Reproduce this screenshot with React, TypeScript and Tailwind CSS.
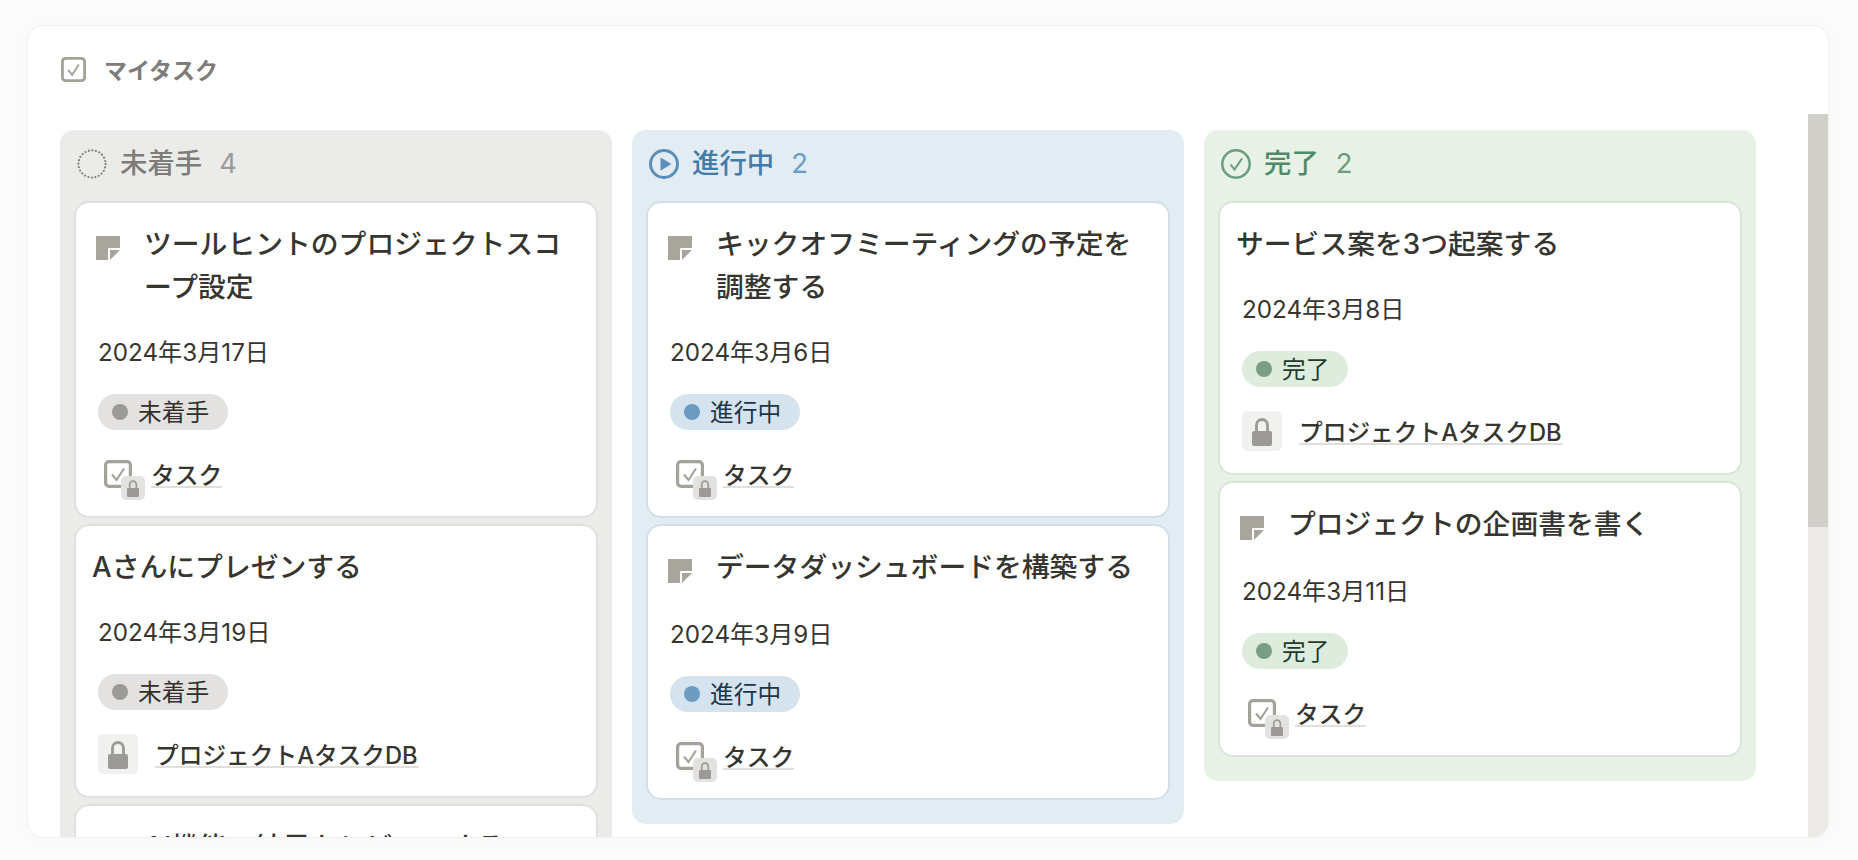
import React from 'react';

type Status = 'todo' | 'doing' | 'done';
type Relation = 'task' | 'db';

interface Task {
	title: string;
	icon?: boolean;
	date: string;
	relation: Relation;
}

const FONT = 'font-["Inter","Noto_Sans_CJK_JP",sans-serif]';

const THEMES = {
	todo: {
		column: 'bg-[#ebebe9]',
		ring: 'shadow-[0_0_0_2px_#e0dfdc]',
		title: 'text-[#7d7c78]',
		count: 'text-[#9b9a97]',
		pill: 'bg-[#e3e2e0] text-[#32302c]',
		dot: 'bg-[#9b9a97]',
	},
	doing: {
		column: 'bg-[#e1ecf3]',
		ring: 'shadow-[0_0_0_2px_#d3dfe8]',
		title: 'text-[#447ba8]',
		count: 'text-[#6a9cc5]',
		pill: 'bg-[#d4e3ee] text-[#1e3548]',
		dot: 'bg-[#6d9abf]',
	},
	done: {
		column: 'bg-[#e7f1e6]',
		ring: 'shadow-[0_0_0_2px_#dae5da]',
		title: 'text-[#4f8a68]',
		count: 'text-[#699c7f]',
		pill: 'bg-[#deecdd] text-[#233a2b]',
		dot: 'bg-[#7a9e85]',
	},
};

const COLUMNS: { status: Status; label: string; tasks: Task[]; count: number }[] = [
	{
		status: 'todo',
		label: '未着手',
		count: 4,
		tasks: [
			{ title: 'ツールヒントのプロジェクトスコープ設定', icon: true, date: '2024年3月17日', relation: 'task' },
			{ title: 'Aさんにプレゼンする', date: '2024年3月19日', relation: 'db' },
			{ title: 'AI機能の結果をレビューする', icon: true, date: '2024年3月21日', relation: 'task' },
		],
	},
	{
		status: 'doing',
		label: '進行中',
		count: 2,
		tasks: [
			{ title: 'キックオフミーティングの予定を調整する', icon: true, date: '2024年3月6日', relation: 'task' },
			{ title: 'データダッシュボードを構築する', icon: true, date: '2024年3月9日', relation: 'task' },
		],
	},
	{
		status: 'done',
		label: '完了',
		count: 2,
		tasks: [
			{ title: 'サービス案を3つ起案する', date: '2024年3月8日', relation: 'db' },
			{ title: 'プロジェクトの企画書を書く', icon: true, date: '2024年3月11日', relation: 'task' },
		],
	},
];

function LockGlyph({ size }: { size: number }) {
	return (
		<svg width={size} height={size} viewBox="0 0 40 40" fill="none">
			<path d="M14.5 21V14a5.5 5.5 0 0 1 11 0v7" stroke="#9b9a97" strokeWidth="2.8" />
			<rect x="10" y="20" width="20" height="15" rx="2" fill="#9b9a97" />
		</svg>
	);
}

function CheckboxIcon({ size }: { size: number }) {
	return (
		<svg width={size} height={size} viewBox="0 0 28 28" fill="none">
			<rect x="1.6" y="1.6" width="24.8" height="24.8" rx="3.4" stroke="#a5a29a" strokeWidth="3.2" />
			<path d="M8 14.5l4.5 5.5L20 8.5" stroke="#a5a29a" strokeWidth="2.1" />
		</svg>
	);
}

function PageIcon() {
	return (
		<svg width="24" height="24" viewBox="0 0 24 24" className="shrink-0 mt-[13px]">
			<path d="M0 0H24V12H12V24H0Z" fill="#a8a59d" />
			<path d="M14 14H24L14 24Z" fill="#a8a59d" />
		</svg>
	);
}

function StatusIcon({ status }: { status: Status }) {
	if (status === 'todo') {
		return (
			<svg width="30" height="30" viewBox="0 0 30 30" fill="none" className="shrink-0">
				<circle cx="15" cy="15" r="13.6" stroke="#85847f" strokeWidth="2.3" strokeLinecap="round" strokeDasharray="0 3.56" />
			</svg>
		);
	}
	if (status === 'doing') {
		return (
			<svg width="30" height="30" viewBox="0 0 30 30" fill="none" className="shrink-0">
				<circle cx="15" cy="15" r="13.5" stroke="#5b8fba" strokeWidth="3" />
				<path d="M11.5 8.6l11 6.4-11 6.8Z" fill="#5b8fba" />
			</svg>
		);
	}
	return (
		<svg width="30" height="30" viewBox="0 0 30 30" fill="none" className="shrink-0">
			<circle cx="15" cy="15" r="13.7" stroke="#6a9c7d" strokeWidth="2.5" />
			<path d="M9.5 15.5l4 5L21 9.5" stroke="#6a9c7d" strokeWidth="2" />
		</svg>
	);
}

function RelationRow({ relation }: { relation: Relation }) {
	if (relation === 'db') {
		return (
			<div className="mt-6 ml-[21px] h-10 flex items-center">
				<div className="w-10 h-10 rounded-[5px] bg-[#f1f1ef] flex items-center justify-center">
					<LockGlyph size={40} />
				</div>
				<span className="ml-[17px] mt-1 pt-[2px] pr-[1px] border-b-2 border-[#e0dfdc] text-[23.7px] leading-5 font-medium text-[#37352f]">
					プロジェクトAタスクDB
				</span>
			</div>
		);
	}
	return (
		<div className="mt-6 ml-[21px] h-10 flex items-center">
			<div className="relative w-[47px] h-10 shrink-0">
				<div className="absolute left-[6px] top-[6px]">
					<CheckboxIcon size={28} />
				</div>
				<div className="absolute left-[23px] top-[22px] w-6 h-6 rounded-[5px] bg-[#e3e2e0]">
					<LockGlyph size={24} />
				</div>
			</div>
			<span className="ml-[6px] mt-1 pt-[2px] border-b-2 border-[#e0dfdc] text-[23.7px] leading-5 font-medium text-[#37352f]">
				タスク
			</span>
		</div>
	);
}

function TaskCard({ task, status }: { task: Task; status: Status }) {
	const theme = THEMES[status];
	return (
		<div className={`rounded-[13px] ${theme.ring} bg-white pt-5 pb-[22px] px-[1px]`}>
			{task.icon ? (
				<div className="flex min-h-[45px] pl-[19px] pr-4">
					<PageIcon />
					<div className="ml-6 text-[27.8px] leading-[43px] font-medium text-[#37352f]">{task.title}</div>
				</div>
			) : (
				<div className="pl-[15px] pr-4 text-[27.8px] leading-[43px] font-medium text-[#37352f]">{task.title}</div>
			)}
			<div className="mt-[26px] pl-[21px] text-[24.2px] leading-9 text-[#37352f]">{task.date}</div>
			<div className="mt-[23px] ml-[21px] flex">
				<div className={`flex items-center h-9 rounded-full pl-[14px] pr-[19px] text-[23.7px] ${theme.pill}`}>
					<span className={`w-4 h-4 rounded-full mr-[10px] ${theme.dot}`} />
					<span className="mt-[2px]">{status === 'todo' ? '未着手' : status === 'doing' ? '進行中' : '完了'}</span>
				</div>
			</div>
			<RelationRow relation={task.relation} />
		</div>
	);
}

export default function App() {
	return (
		<div className={`h-[860px] w-full overflow-hidden bg-[#fbfbfb] pt-[25px] pl-[27px] ${FONT}`}>
			<div className="w-[1802px] h-[813px] rounded-2xl border border-[#f0f0ee] bg-white overflow-hidden flex flex-col shadow-[0_0_24px_rgba(0,0,0,0.02)]">
				<div className="h-[88px] shrink-0 flex items-start pl-[33px] pt-[31px]">
					<CheckboxIcon size={25} />
					<span className="ml-[18px] mt-[1px] text-[23px] leading-[26px] font-bold text-[#7d7c78]">マイタスク</span>
				</div>
				<div className="flex-1 min-h-0 flex">
					<div className="flex-1 min-w-0 overflow-hidden flex items-start gap-5 pl-[32px] pt-4">
						{COLUMNS.map((col) => {
							const theme = THEMES[col.status];
							return (
								<div key={col.status} className={`w-[552px] shrink-0 rounded-[14px] px-4 pb-[26px] ${theme.column}`}>
									<div className="h-[73px] flex items-center pl-[1px] pb-[6px]">
										<StatusIcon status={col.status} />
										<span className={`ml-[13px] text-[27.4px] font-medium ${theme.title}`}>{col.label}</span>
										<span className={`ml-[17px] text-[27.4px] ${theme.count}`}>{col.count}</span>
									</div>
									<div className="flex flex-col gap-[10px]">
										{col.tasks.map((task) => (
											<TaskCard key={task.title} task={task} status={col.status} />
										))}
									</div>
								</div>
							);
						})}
					</div>
					<div className="w-5 shrink-0 bg-[#ebeae7]">
						<div className="h-[413px] bg-[#d0cfca]" />
					</div>
				</div>
			</div>
		</div>
	);
}
